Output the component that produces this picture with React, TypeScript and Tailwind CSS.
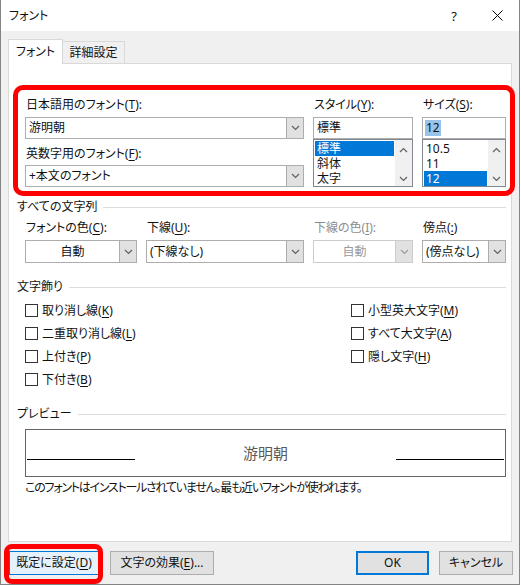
import React from "react";

// Word のフォント ダイアログ

const U = ({ children }: { children: React.ReactNode }) => (
  <span className="underline decoration-1 underline-offset-[2px]">{children}</span>
);

const Chevron = ({ up = false }: { up?: boolean }) => (
  <svg width="9" height="6" viewBox="0 0 9 6">
    <path
      d={up ? "M1 5L4.5 1.5L8 5" : "M1 1L4.5 4.5L8 1"}
      fill="none"
      stroke="currentColor"
      strokeWidth="1.2"
    />
  </svg>
);

const Combo = ({
  value,
  center = false,
  disabled = false,
  tall = false,
}: {
  value: string;
  center?: boolean;
  disabled?: boolean;
  tall?: boolean;
}) => (
  <div
    className={`flex bg-white border ${tall ? "h-[23px]" : "h-[22px]"} ${
      disabled ? "border-[#cccccc] text-[#9a9a9a]" : "border-[#adadad]"
    }`}
  >
    <div className={`flex flex-1 items-center ${center ? "justify-center" : "pl-[3px]"}`}>
      {value}
    </div>
    <div
      className={`flex w-[17px] items-center justify-center bg-[#e1e1e1] border-l ${
        disabled ? "border-[#cccccc] text-[#9a9a9a]" : "border-[#adadad] text-[#606060]"
      }`}
    >
      <Chevron />
    </div>
  </div>
);

const ListBox = ({ items, selected }: { items: string[]; selected: number }) => (
  <div className="flex h-[48px] bg-white border border-[#828790]">
    <div className="flex-1 p-px">
      {items.map((it, i) => (
        <div
          key={it}
          className={`h-[15px] overflow-hidden leading-[15px] pl-[2px] ${
            i === selected ? "bg-[#0078d7] text-white" : ""
          }`}
        >
          {it}
        </div>
      ))}
    </div>
    <div className="flex w-[17px] flex-col items-center justify-between bg-[#f0f0f0] pt-[7px] pb-[4px] text-[#606060]">
      <Chevron up />
      <Chevron />
    </div>
  </div>
);

const Group = ({ title }: { title: string }) => (
  <div className="flex h-[16px] items-center gap-[6px]">
    <span>{title}</span>
    <div className="h-px flex-1 bg-[#dcdcdc]" />
  </div>
);

const Check = ({ children }: { children: React.ReactNode }) => (
  <div className="flex h-[23px] items-center gap-[4px]">
    <div className="h-[13px] w-[13px] border border-[#333333] bg-white" />
    <span>{children}</span>
  </div>
);

const Label = ({ children, dim = false }: { children: React.ReactNode; dim?: boolean }) => (
  <div className={`h-[16px] pl-px ${dim ? "text-[#8d8d8d]" : ""}`}>{children}</div>
);

export default function App() {
  return (
    <div className="h-[586px] w-[521px] bg-white text-[12px] leading-[16px] text-[#111111] font-['Noto_Sans','Noto_Sans_CJK_JP',sans-serif] [font-feature-settings:'palt']">
      <div className="flex h-[585px] w-[520px] flex-col border-x border-b border-[#858585] bg-[#f0f0f0]">
        {/* title bar */}
        <div className="flex h-[31px] items-center bg-white pl-[8px] pr-[16px]">
          <span>フォント</span>
          <span className="ml-auto mr-[35px] text-[13px]">?</span>
          <svg width="11" height="11" viewBox="0 0 11 11">
            <path d="M0.5 0.5L10.5 10.5M10.5 0.5L0.5 10.5" stroke="#000" strokeWidth="1" />
          </svg>
        </div>

        <div className="flex flex-1 flex-col px-[7px] pt-[8px]">
          {/* tabs */}
          <div className="flex items-end">
            <div className="relative z-10 -mb-px flex h-[25px] w-[55px] items-center justify-center border-x border-t border-[#d9d9d9] bg-white">
              フォント
            </div>
            <div className="flex h-[22px] w-[62px] items-center justify-center border-t border-r border-[#d9d9d9]">
              詳細設定
            </div>
          </div>

          {/* panel */}
          <div className="relative h-[479px] border border-[#d9d9d9] bg-white pl-[8px] pr-[5px] pt-[33px]">
            <div className="pointer-events-none absolute left-[4px] top-[21px] h-[111px] w-[502px] rounded-[10px] border-[5px] border-[#ff0000]" />

            <div className="grid grid-cols-[279px_100px_84px] gap-x-[9px] pl-[8px]">
              <div className="flex flex-col">
                <Label>
                  日本語用のフォント(<U>T</U>):
                </Label>
                <div className="mt-[4px]">
                  <Combo value="游明朝" />
                </div>
                <div className="mt-[7px]">
                  <Label>
                    英数字用のフォント(<U>F</U>):
                  </Label>
                </div>
                <div className="mt-[3px]">
                  <Combo value="+本文のフォント" />
                </div>
              </div>
              <div className="flex flex-col">
                <Label>
                  スタイル(<U>Y</U>):
                </Label>
                <div className="mt-[4px] flex h-[22px] items-center border border-[#adadad] bg-white pl-[3px]">
                  標準
                </div>
                <ListBox items={["標準", "斜体", "太字"]} selected={0} />
              </div>
              <div className="flex flex-col">
                <Label>
                  サイズ(<U>S</U>):
                </Label>
                <div className="mt-[4px] flex h-[22px] items-center border border-[#adadad] bg-white pl-[2px]">
                  <span className="bg-[#99c4ea] px-px leading-[16px]">12</span>
                </div>
                <ListBox items={["10.5", "11", "12"]} selected={2} />
              </div>
            </div>

            <div className="mt-[12px]">
              <Group title="すべての文字列" />
            </div>

            <div className="mt-[5px] grid grid-cols-[112px_158px_100px_84px] gap-x-[9px] pl-[8px]">
              <div className="flex flex-col gap-[4px]">
                <Label>
                  フォントの色(<U>C</U>):
                </Label>
                <Combo value="自動" center tall />
              </div>
              <div className="flex flex-col gap-[4px]">
                <Label>
                  下線(<U>U</U>):
                </Label>
                <Combo value="(下線なし)" tall />
              </div>
              <div className="flex flex-col gap-[4px]">
                <Label dim>
                  下線の色(<U>I</U>):
                </Label>
                <Combo value="自動" center disabled tall />
              </div>
              <div className="flex flex-col gap-[4px]">
                <Label>
                  傍点(<U>:</U>)
                </Label>
                <Combo value="(傍点なし)" tall />
              </div>
            </div>

            <div className="mt-[16px]">
              <Group title="文字飾り" />
            </div>

            <div className="mt-[4px] grid grid-cols-[326px_1fr] pl-[8px]">
              <div className="flex flex-col">
                <Check>
                  取り消し線(<U>K</U>)
                </Check>
                <Check>
                  二重取り消し線(<U>L</U>)
                </Check>
                <Check>
                  上付き(<U>P</U>)
                </Check>
                <Check>
                  下付き(<U>B</U>)
                </Check>
              </div>
              <div className="flex flex-col">
                <Check>
                  小型英大文字(<U>M</U>)
                </Check>
                <Check>
                  すべて大文字(<U>A</U>)
                </Check>
                <Check>
                  隠し文字(<U>H</U>)
                </Check>
              </div>
            </div>

            <div className="mt-[15px]">
              <Group title="プレビュー" />
            </div>

            <div className="ml-[8px] mt-[7px] flex h-[48px] items-center justify-between border border-[#646464] px-px">
              <div className="mt-[12px] h-px w-[108px] bg-black" />
              <span className="text-[15px] leading-[20px] text-[#5a5a5a]">游明朝</span>
              <div className="mt-[12px] h-px w-[108px] bg-black" />
            </div>

            <div className="ml-[8px] mt-[3px] tracking-[-1.25px]">
              このフォントはインストールされていません。最も近いフォントが使われます。
            </div>
          </div>

          {/* footer */}
          <div className="flex items-start pl-px pt-[9px] -mr-px">
            <div className="relative">
              <button className="flex h-[24px] w-[90px] items-center justify-center border border-[#0078d7] bg-[#e5f1fb]">
                既定に設定(<U>D</U>)
              </button>
              <div className="pointer-events-none absolute -left-[5px] -top-[7px] h-[40px] w-[99px] rounded-[8px] border-[5px] border-[#ff0000]" />
            </div>
            <button className="ml-[11px] flex h-[24px] w-[104px] items-center justify-center border border-[#adadad] bg-[#e1e1e1]">
              文字の効果(<U>E</U>)...
            </button>
            <button className="ml-auto flex h-[24px] w-[73px] items-center justify-center border-2 border-[#0078d7] bg-[#e1e1e1]">
              OK
            </button>
            <button className="ml-[10px] flex h-[24px] w-[74px] items-center justify-center border border-[#adadad] bg-[#e1e1e1]">
              キャンセル
            </button>
          </div>
        </div>
      </div>
    </div>
  );
}
